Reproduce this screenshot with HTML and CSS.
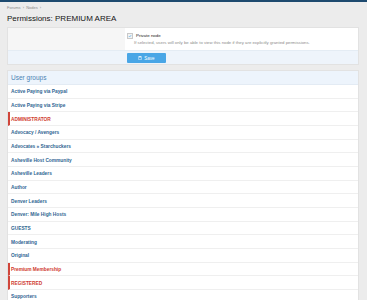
FILE: index.html
```html
<!DOCTYPE html>
<html>
<head>
<meta charset="utf-8">
<link rel="stylesheet" href="styles.css">
</head>
<body>
<div class="topbar"></div>
<div class="page">
  <div class="crumbs">Forums <span class="sep">›</span> Nodes <span class="sep">›</span></div>
  <h1 class="title">Permissions: PREMIUM AREA</h1>
  <div class="block form">
    <div class="form-row">
      <div class="form-label"></div>
      <div class="form-input">
        <label class="check"><span class="box"><svg viewBox="0 0 10 10" width="4" height="4"><path d="M2 5.2 L4.2 7.4 L8 2.8" fill="none" stroke="#47a7eb" stroke-width="1.6"/></svg></span>Private node</label>
        <div class="hint">If selected, users will only be able to view this node if they are explicitly granted permissions.</div>
      </div>
    </div>
    <div class="form-footer">
      <div class="form-label"></div>
      <div class="form-input">
        <button class="save"><svg viewBox="0 0 10 10" width="4" height="4"><rect x="1" y="1" width="8" height="8" rx="1" fill="none" stroke="#fff" stroke-width="1.2"/><rect x="3" y="1" width="4" height="3" fill="none" stroke="#fff" stroke-width="1"/></svg>Save</button>
      </div>
    </div>
  </div>
  <div class="block groups">
    <div class="block-header">User groups</div>
    <div class="row">Active Paying via Paypal</div>
    <div class="row">Active Paying via Stripe</div>
    <div class="row custom">ADMINISTRATOR</div>
    <div class="row">Advocacy / Avengers</div>
    <div class="row">Advocates » Starchuckers</div>
    <div class="row">Asheville Host Community</div>
    <div class="row">Asheville Leaders</div>
    <div class="row">Author</div>
    <div class="row">Denver Leaders</div>
    <div class="row">Denver: Mile High Hosts</div>
    <div class="row">GUESTS</div>
    <div class="row">Moderating</div>
    <div class="row">Original</div>
    <div class="row custom">Premium Membership</div>
    <div class="row custom">REGISTERED</div>
    <div class="row">Supporters</div>
  </div>
</div>
</body>
</html>
```
FILE: styles.css
```css
html, body {
  margin: 0;
  padding: 0;
  background: #ececec;
  font-family: "Liberation Sans", Arial, sans-serif;
}
.topbar {
  height: 2px;
  background: #1d4a6f;
}
.page {
  padding: 0 8px 0 7px;
}
.crumbs {
  font-size: 4px;
  color: #8a8a8a;
  line-height: 6px;
  padding-top: 3px;
}
.crumbs .sep {
  margin: 0 1px;
}
.title {
  margin: 2px 0 0 0;
  font-size: 8px;
  font-weight: normal;
  color: #141414;
  line-height: 12px;
  height: 14px;
}
.block {
  border: 1px solid #e2e2e2;
  background: #fff;
}
.form-row, .form-footer {
  display: flex;
}
.form-row .form-label,
.form-footer .form-label {
  width: 117px;
}
.form-row .form-label {
  background: #f6f6f6;
}
.form-row .form-input {
  flex: 1;
  padding: 5px 2px 6px 2px;
  height: 11px;
}
.form-footer {
  background: #eef4fb;
  border-top: 1px solid #e4ecf4;
  height: 13px;
}
.form-footer .form-input {
  padding-top: 2px;
  padding-left: 2px;
}
.check {
  display: flex;
  align-items: center;
  font-size: 4.4px;
  color: #222;
  line-height: 6px;
}
.box {
  width: 4px;
  height: 4px;
  border: 0.5px solid #c9c9c9;
  background: #f3f3f3;
  margin-right: 3px;
  display: flex;
  align-items: center;
  justify-content: center;
}
.hint {
  font-size: 4.3px;
  color: #8c8c8c;
  padding-left: 7px;
  margin-top: 1px;
  line-height: 5px;
}
.save {
  width: 39px;
  height: 10px;
  border: none;
  border-radius: 1px;
  background: #49a6e6;
  color: #fff;
  font-family: "Liberation Sans", Arial, sans-serif;
  font-size: 4.5px;
  display: flex;
  align-items: center;
  justify-content: center;
  gap: 2px;
  padding: 0;
}
.groups {
  margin-top: 5px;
}
.block-header {
  background: #edf4fc;
  color: #4b83b4;
  font-size: 6.5px;
  height: 14px;
  line-height: 14px;
  padding-left: 3px;
  border-bottom: 1px solid #e3ebf4;
  box-sizing: border-box;
}
.row {
  height: 13.67px;
  box-sizing: border-box;
  border-bottom: 1px solid #efefef;
  display: flex;
  align-items: center;
  padding-left: 3px;
  padding-top: 1px;
  font-size: 4.8px;
  font-weight: bold;
  color: #2f6592;
}
.row.custom {
  color: #cf3a2e;
  border-left: 2px solid #d0453a;
  padding-left: 1px;
}
```
